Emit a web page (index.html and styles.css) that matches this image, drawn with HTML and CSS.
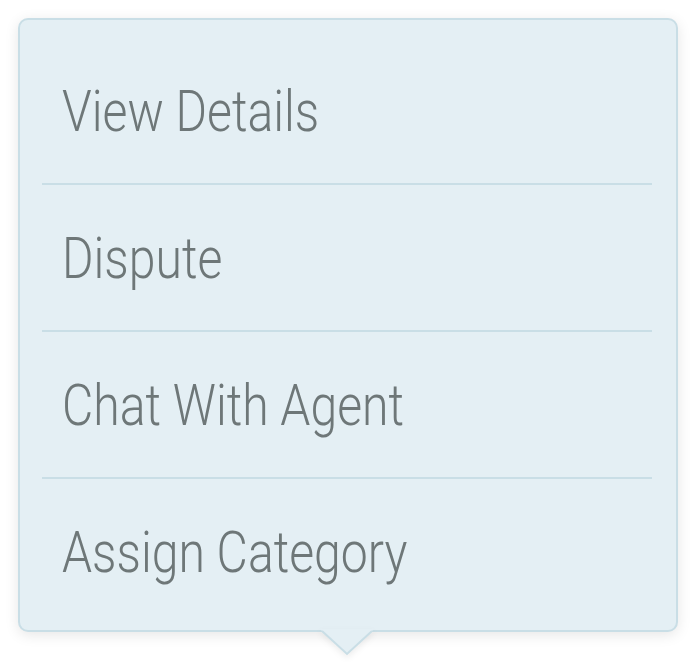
FILE: index.html
```html
<!DOCTYPE html>
<html>
<head>
<meta charset="utf-8">
<link rel="stylesheet" href="styles.css">
</head>
<body>
<div class="menu">
  <ul class="menu-list">
    <li class="menu-item"><span class="label">View Details</span></li>
    <li class="menu-item"><span class="label">Dispute</span></li>
    <li class="menu-item"><span class="label">Chat With Agent</span></li>
    <li class="menu-item"><span class="label">Assign Category</span></li>
  </ul>
  <svg class="arrow" width="62" height="34" viewBox="0 0 62 34">
    <polygon points="4,3 58,3 31,28" fill="#e4eff4"/>
    <polyline points="6,5 31,28 56,5" fill="none" stroke="#c9dee6" stroke-width="2"/>
  </svg>
</div>
</body>
</html>
```
FILE: styles.css
```css
html, body {
  margin: 0;
  padding: 0;
  background: #ffffff;
}
body {
  box-sizing: border-box;
  height: 671px;
  padding: 18px 18px 0 18px;
  font-family: Roboto, "Liberation Sans", sans-serif;
}
.menu {
  position: relative;
  width: 660px;
  height: 614px;
  box-sizing: border-box;
  background: #e4eff4;
  border: 2px solid #c9dee6;
  border-radius: 10px;
  box-shadow: 0 3px 14px rgba(0, 0, 0, 0.10);
}
.menu-list {
  list-style: none;
  margin: 0;
  padding: 18px 24px 0 22px;
}
.menu-item {
  height: 145px;
  display: flex;
  align-items: center;
  border-bottom: 2px solid #c9dee6;
  padding-left: 20px;
  overflow: hidden;
}
.menu-item:last-child {
  border-bottom: none;
}
.label {
  display: inline-block;
  font-size: 58px;
  font-weight: 300;
  color: #6e7778;
  transform: scaleX(0.83);
  transform-origin: left center;
  white-space: nowrap;
}
.arrow {
  position: absolute;
  left: 296px;
  top: 606px;
  filter: drop-shadow(0 3px 3px rgba(0, 0, 0, 0.07));
}
```
